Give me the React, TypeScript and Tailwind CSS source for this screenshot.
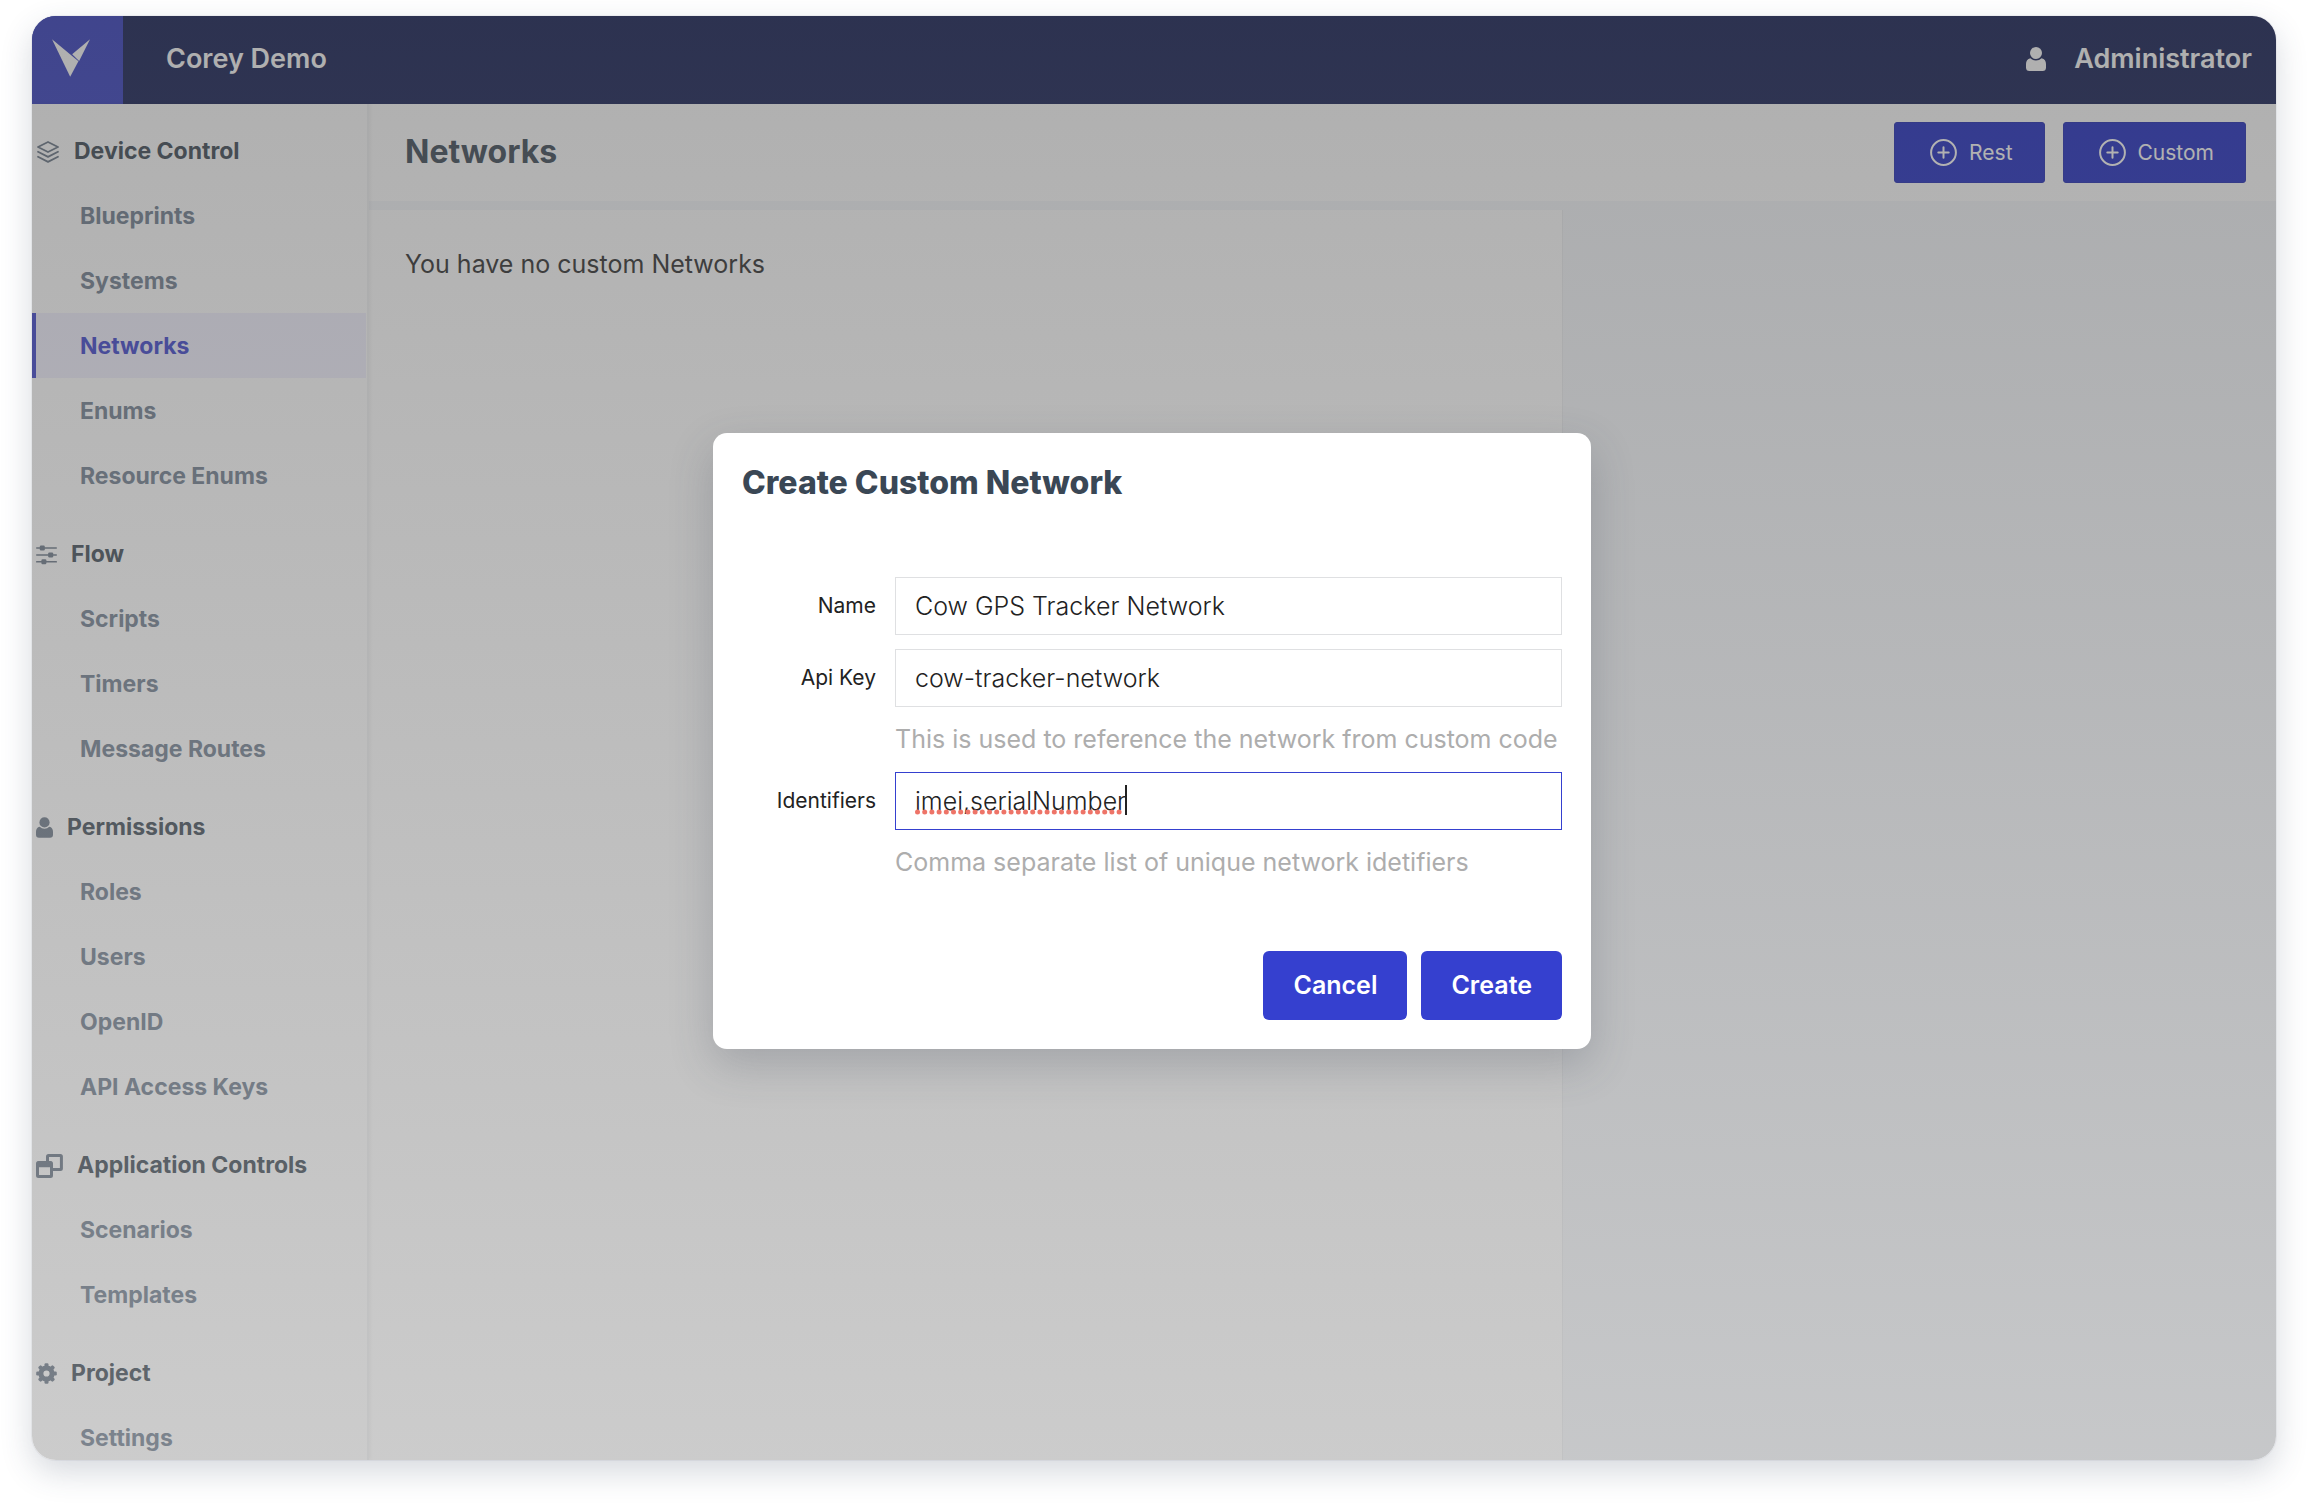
import type { ReactNode } from "react";

function Logo() {
  return (
    <svg viewBox="0 0 115 114" className="size-[38px]" fill="#fff" aria-hidden="true">
      <path d="M0 0 80 67 55 114Z" />
      <path d="M115 0 61 46 82 66Z" />
    </svg>
  );
}

function UserIcon({ className }: { className: string }) {
  return (
    <svg viewBox="0 0 20 24" className={className} fill="currentColor" aria-hidden="true">
      <circle cx="10" cy="6" r="6" />
      <path d="M4.4 11.2a7.8 7.8 0 0 0 11.2 0C18.600 11.600 20 14 20 17v3.500a3.500 3.500 0 0 1-3.500 3.500h-13A3.500 3.500 0 0 1 0 20.500V17c0-3 1.400-5.400 4.400-5.800Z" />
    </svg>
  );
}

function LayersIcon() {
  return (
    <svg viewBox="-1 0 24 22" className="h-[22px] w-6" fill="none" stroke="currentColor" strokeWidth="1.800" strokeLinejoin="round" strokeLinecap="round" aria-hidden="true">
      <path d="M11 1 21 6 11 11 1 6Z" />
      <path d="M1 10.800 11 15.900 21 10.800" />
      <path d="M1 15.800 11 20.900 21 15.800" />
    </svg>
  );
}

function SlidersIcon() {
  return (
    <svg viewBox="0 0 21 20" className="h-5 w-[21px]" fill="currentColor" aria-hidden="true">
      <rect x="0" y="2.300" width="21" height="1.500" rx=".7" />
      <rect x="0" y="9.200" width="21" height="1.500" rx=".7" />
      <rect x="0" y="16.100" width="21" height="1.500" rx=".7" />
      <rect x="3.800" y=".5" width="5" height="5" rx="1.200" />
      <rect x="12.200" y="7.400" width="5" height="5" rx="1.200" />
      <rect x="5.400" y="14.300" width="5" height="5" rx="1.200" />
    </svg>
  );
}

function WindowsIcon() {
  return (
    <svg viewBox="0 0 27 24" className="h-6 w-[27px]" fill="none" stroke="currentColor" aria-hidden="true">
      <path d="M11.500 7V2.600a1 1 0 0 1 1-1h11.900a1 1 0 0 1 1 1v11.900a1 1 0 0 1-1 1H17" strokeWidth="3" />
      <rect x="1.500" y="8.500" width="14" height="14" rx="1" strokeWidth="3" />
      <path d="M1 10.500h15" strokeWidth="5.500" />
    </svg>
  );
}

function GearIcon() {
  return (
    <svg viewBox="-10.500 -10.500 21 21" className="size-[21px]" fill="currentColor" aria-hidden="true">
      <circle r="5.600" fill="none" stroke="currentColor" strokeWidth="5" />
      {[0, 45, 90, 135, 180, 225, 270, 315].map((angle) => (
        <rect key={angle} x="-2" y="-10.300" width="4" height="4.500" rx="1.200" transform={`rotate(${angle})`} />
      ))}
    </svg>
  );
}

function PlusCircleIcon() {
  return (
    <svg viewBox="0 0 27 27" className="size-[27px]" fill="none" stroke="currentColor" strokeWidth="2" strokeLinecap="round" aria-hidden="true">
      <circle cx="13.500" cy="13.500" r="12.400" />
      <path d="M13.500 8.300v10.400M8.300 13.500h10.400" />
    </svg>
  );
}

type Section = { title: string; icon: ReactNode; items: string[] };

const sections: Section[] = [
  { title: "Device Control", icon: <LayersIcon />, items: ["Blueprints", "Systems", "Networks", "Enums", "Resource Enums"] },
  { title: "Flow", icon: <SlidersIcon />, items: ["Scripts", "Timers", "Message Routes"] },
  { title: "Permissions", icon: <UserIcon className="h-[21px] w-[17px]" />, items: ["Roles", "Users", "OpenID", "API Access Keys"] },
  { title: "Application Controls", icon: <WindowsIcon />, items: ["Scenarios", "Templates"] },
  { title: "Project", icon: <GearIcon />, items: ["Settings"] },
];

function Sidebar() {
  return (
    <nav className="relative flex w-[337px] shrink-0 flex-col gap-[13px] overflow-hidden border-r-2 border-[#f3f4f5] bg-white pt-[14px] pr-px text-[23px] font-bold shadow-[1px_0_4px_rgba(0,0,0,0.06)]">
      {sections.map((section) => (
        <section key={section.title} className="shrink-0">
          <h2 className="flex h-[65px] items-center gap-[14px] pt-0.5 pl-1 text-[#4b5661]">
            <span className="text-[#74808f]">{section.icon}</span>
            {section.title}
          </h2>
          <ul>
            {section.items.map((item) => (
              <li key={item}>
                <a
                  href="#"
                  className={
                    item === "Networks"
                      ? "flex h-[65px] items-center border-l-4 border-[#4a50cf] bg-[#f2f1fe] pt-px pl-11 text-[#4a50cf]"
                      : "flex h-[65px] items-center border-l-4 border-transparent pt-px pl-11 text-[#7a8797]"
                  }
                >
                  {item}
                </a>
              </li>
            ))}
          </ul>
        </section>
      ))}
    </nav>
  );
}

function ToolbarButton({ label }: { label: string }) {
  return (
    <button type="button" className="flex h-[61px] items-center gap-3 rounded-[3px] border border-[#303ab8] bg-[#303bc6] pr-[31px] pl-[35px] text-[21px] text-white">
      <PlusCircleIcon />
      {label}
    </button>
  );
}

const inputClass = "block h-[58px] w-full border border-[#dfe0e2] bg-white px-[19px] text-[25px] font-light text-[#222] outline-none focus:border-[#3540cf]";
const labelClass = "text-right text-[21px] text-[#222]";
const hintClass = "col-start-2 flex h-[65px] items-center text-[25px] whitespace-nowrap text-[#adadad]";

/* Spell-check dots and text caret shown over the focused field */
function SpellingMarks() {
  return (
    <svg viewBox="0 0 212 30" className="pointer-events-none absolute top-[13px] left-5 h-[30px] w-[212px]" aria-hidden="true">
      {Array.from({ length: 29 }, (_, i) => (
        <circle key={i} cx={2.5 + i * 7.2} cy="27" r="2.500" fill="#ee7468" />
      ))}
      <rect x="210" y="0" width="2" height="30" fill="#222" />
    </svg>
  );
}

function CreateNetworkDialog() {
  return (
    <div className="absolute inset-0 flex items-center justify-center bg-linear-to-b from-[rgba(55,55,55,0.4)] to-[rgba(127,127,127,0.4)] pt-1.5 pr-1">
      <form
        role="dialog"
        aria-labelledby="dialog-title"
        onSubmit={(event) => event.preventDefault()}
        className="w-[878px] rounded-[14px] bg-white p-[29px] shadow-[0_16px_44px_rgba(60,65,85,0.24)]"
      >
        <h2 id="dialog-title" className="text-[32px] leading-[42px] font-extrabold text-[#3a4755]">
          Create Custom Network
        </h2>
        <div className="mt-[73px] grid grid-cols-[134px_1fr] items-center gap-x-[19px]">
          <label htmlFor="name" className={labelClass}>Name</label>
          <input id="name" type="text" defaultValue="Cow GPS Tracker Network" className={inputClass} />
          <div className="col-span-2 h-[14px]" />
          <label htmlFor="api-key" className={labelClass}>Api Key</label>
          <input id="api-key" type="text" defaultValue="cow-tracker-network" className={inputClass} />
          <p className={hintClass}>This is used to reference the network from custom code</p>
          <label htmlFor="identifiers" className={labelClass}>Identifiers</label>
          <div className="relative">
            <input
              id="identifiers"
              type="text"
              spellCheck={false}
              defaultValue="imei,serialNumber"
              className="block h-[58px] w-full border border-[#3540cf] bg-white px-[19px] text-[25px] font-light text-[#222] outline-none"
            />
            <SpellingMarks />
          </div>
          <p className={hintClass}>Comma separate list of unique network idetifiers</p>
        </div>
        <div className="mt-14 flex justify-end gap-[14px] text-[25px] font-semibold text-white">
          <button type="button" className="h-[69px] rounded-md bg-[#3540cf] px-[30px]">Cancel</button>
          <button type="submit" className="h-[69px] rounded-md bg-[#3540cf] px-[30px]">Create</button>
        </div>
      </form>
    </div>
  );
}

export default function App() {
  return (
    <div className="h-screen bg-white px-8 pt-4 pb-12 font-['Inter',sans-serif]">
      <div className="relative flex h-full flex-col overflow-hidden rounded-3xl shadow-[0_0_0_1px_rgba(60,75,100,0.06),0_12px_32px_rgba(50,65,90,0.2)]">
        <header className="flex h-[88px] shrink-0 items-center bg-[#262f61] text-[27px] font-semibold text-white">
          <a href="#" aria-label="Home" className="flex h-full w-[91px] items-center bg-[#464ec6] pb-1 pl-5">
            <Logo />
          </a>
          <span className="flex-1 pb-0.5 pl-[43px]">Corey Demo</span>
          <button type="button" className="flex items-center gap-7 pr-6 pb-0.5">
            <UserIcon className="h-6 w-5" />
            Administrator
          </button>
        </header>
        <div className="flex min-h-0 flex-1">
          <Sidebar />
          <main className="flex min-w-0 flex-1 flex-col bg-[#f6f8fb]">
            <div className="flex h-[97px] shrink-0 items-center gap-[18px] bg-white pr-[30px] pl-9">
              <h1 className="flex-1 pb-0.5 text-[32px] font-bold text-[#4b5763]">Networks</h1>
              <ToolbarButton label="Rest" />
              <ToolbarButton label="Custom" />
            </div>
            <div className="mt-[9px] w-[62.600%] flex-1 border-r border-[#eeeff1] bg-white px-9 pt-[35px] text-[25px] leading-[38px] text-[#3a3a3a]">
              You have no custom Networks
            </div>
          </main>
        </div>
        <CreateNetworkDialog />
      </div>
    </div>
  );
}
